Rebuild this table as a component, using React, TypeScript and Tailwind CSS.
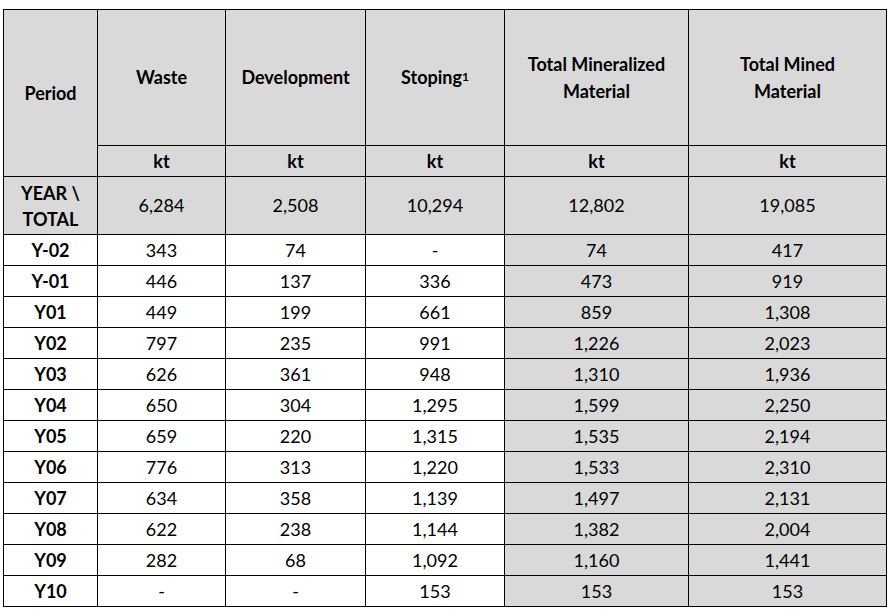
import React from "react";

const rows: string[][] = [
  ["Y-02", "343", "74", "-", "74", "417"],
  ["Y-01", "446", "137", "336", "473", "919"],
  ["Y01", "449", "199", "661", "859", "1,308"],
  ["Y02", "797", "235", "991", "1,226", "2,023"],
  ["Y03", "626", "361", "948", "1,310", "1,936"],
  ["Y04", "650", "304", "1,295", "1,599", "2,250"],
  ["Y05", "659", "220", "1,315", "1,535", "2,194"],
  ["Y06", "776", "313", "1,220", "1,533", "2,310"],
  ["Y07", "634", "358", "1,139", "1,497", "2,131"],
  ["Y08", "622", "238", "1,144", "1,382", "2,004"],
  ["Y09", "282", "68", "1,092", "1,160", "1,441"],
  ["Y10", "-", "-", "153", "153", "153"],
];

const cell = "border border-black text-center align-middle p-0";

export default function App() {
  return (
    <div className="w-[894px] h-[615px] bg-white pl-[3px] pt-[9px] text-black text-[18px] leading-[27px] [font-family:Lato,'Open_Sans',sans-serif]">
      <table className="table-fixed border-collapse w-[883px]">
        <colgroup>
          <col className="w-[94px]" />
          <col className="w-[128px]" />
          <col className="w-[140px]" />
          <col className="w-[139px]" />
          <col className="w-[184px]" />
          <col className="w-[198px]" />
        </colgroup>
        <thead>
          <tr className="h-[136px] bg-[#d9d9d9] font-bold">
            <td rowSpan={2} className={cell}>Period</td>
            <td className={cell}>Waste</td>
            <td className={cell}>Development</td>
            <td className={cell}>
              Stoping<sup className="text-[12px] relative -top-[3px]">1</sup>
            </td>
            <td className={cell}>
              Total Mineralized
              <br />
              Material
            </td>
            <td className={cell}>
              Total Mined
              <br />
              Material
            </td>
          </tr>
          <tr className="h-[31px] bg-[#d9d9d9] font-bold">
            <td className={cell}>kt</td>
            <td className={cell}>kt</td>
            <td className={cell}>kt</td>
            <td className={cell}>kt</td>
            <td className={cell}>kt</td>
          </tr>
        </thead>
        <tbody>
          <tr className="h-[58px] bg-[#d9d9d9]">
            <td className={`${cell} font-bold leading-[26px]`}>
              YEAR \
              <br />
              TOTAL
            </td>
            <td className={cell}>6,284</td>
            <td className={cell}>2,508</td>
            <td className={cell}>10,294</td>
            <td className={cell}>12,802</td>
            <td className={cell}>19,085</td>
          </tr>
          {rows.map((r) => (
            <tr key={r[0]} className="h-[31px]">
              <td className={`${cell} font-bold bg-white`}>{r[0]}</td>
              <td className={`${cell} bg-white`}>{r[1]}</td>
              <td className={`${cell} bg-white`}>{r[2]}</td>
              <td className={`${cell} bg-white`}>{r[3]}</td>
              <td className={`${cell} bg-[#d9d9d9]`}>{r[4]}</td>
              <td className={`${cell} bg-[#d9d9d9]`}>{r[5]}</td>
            </tr>
          ))}
        </tbody>
      </table>
    </div>
  );
}
